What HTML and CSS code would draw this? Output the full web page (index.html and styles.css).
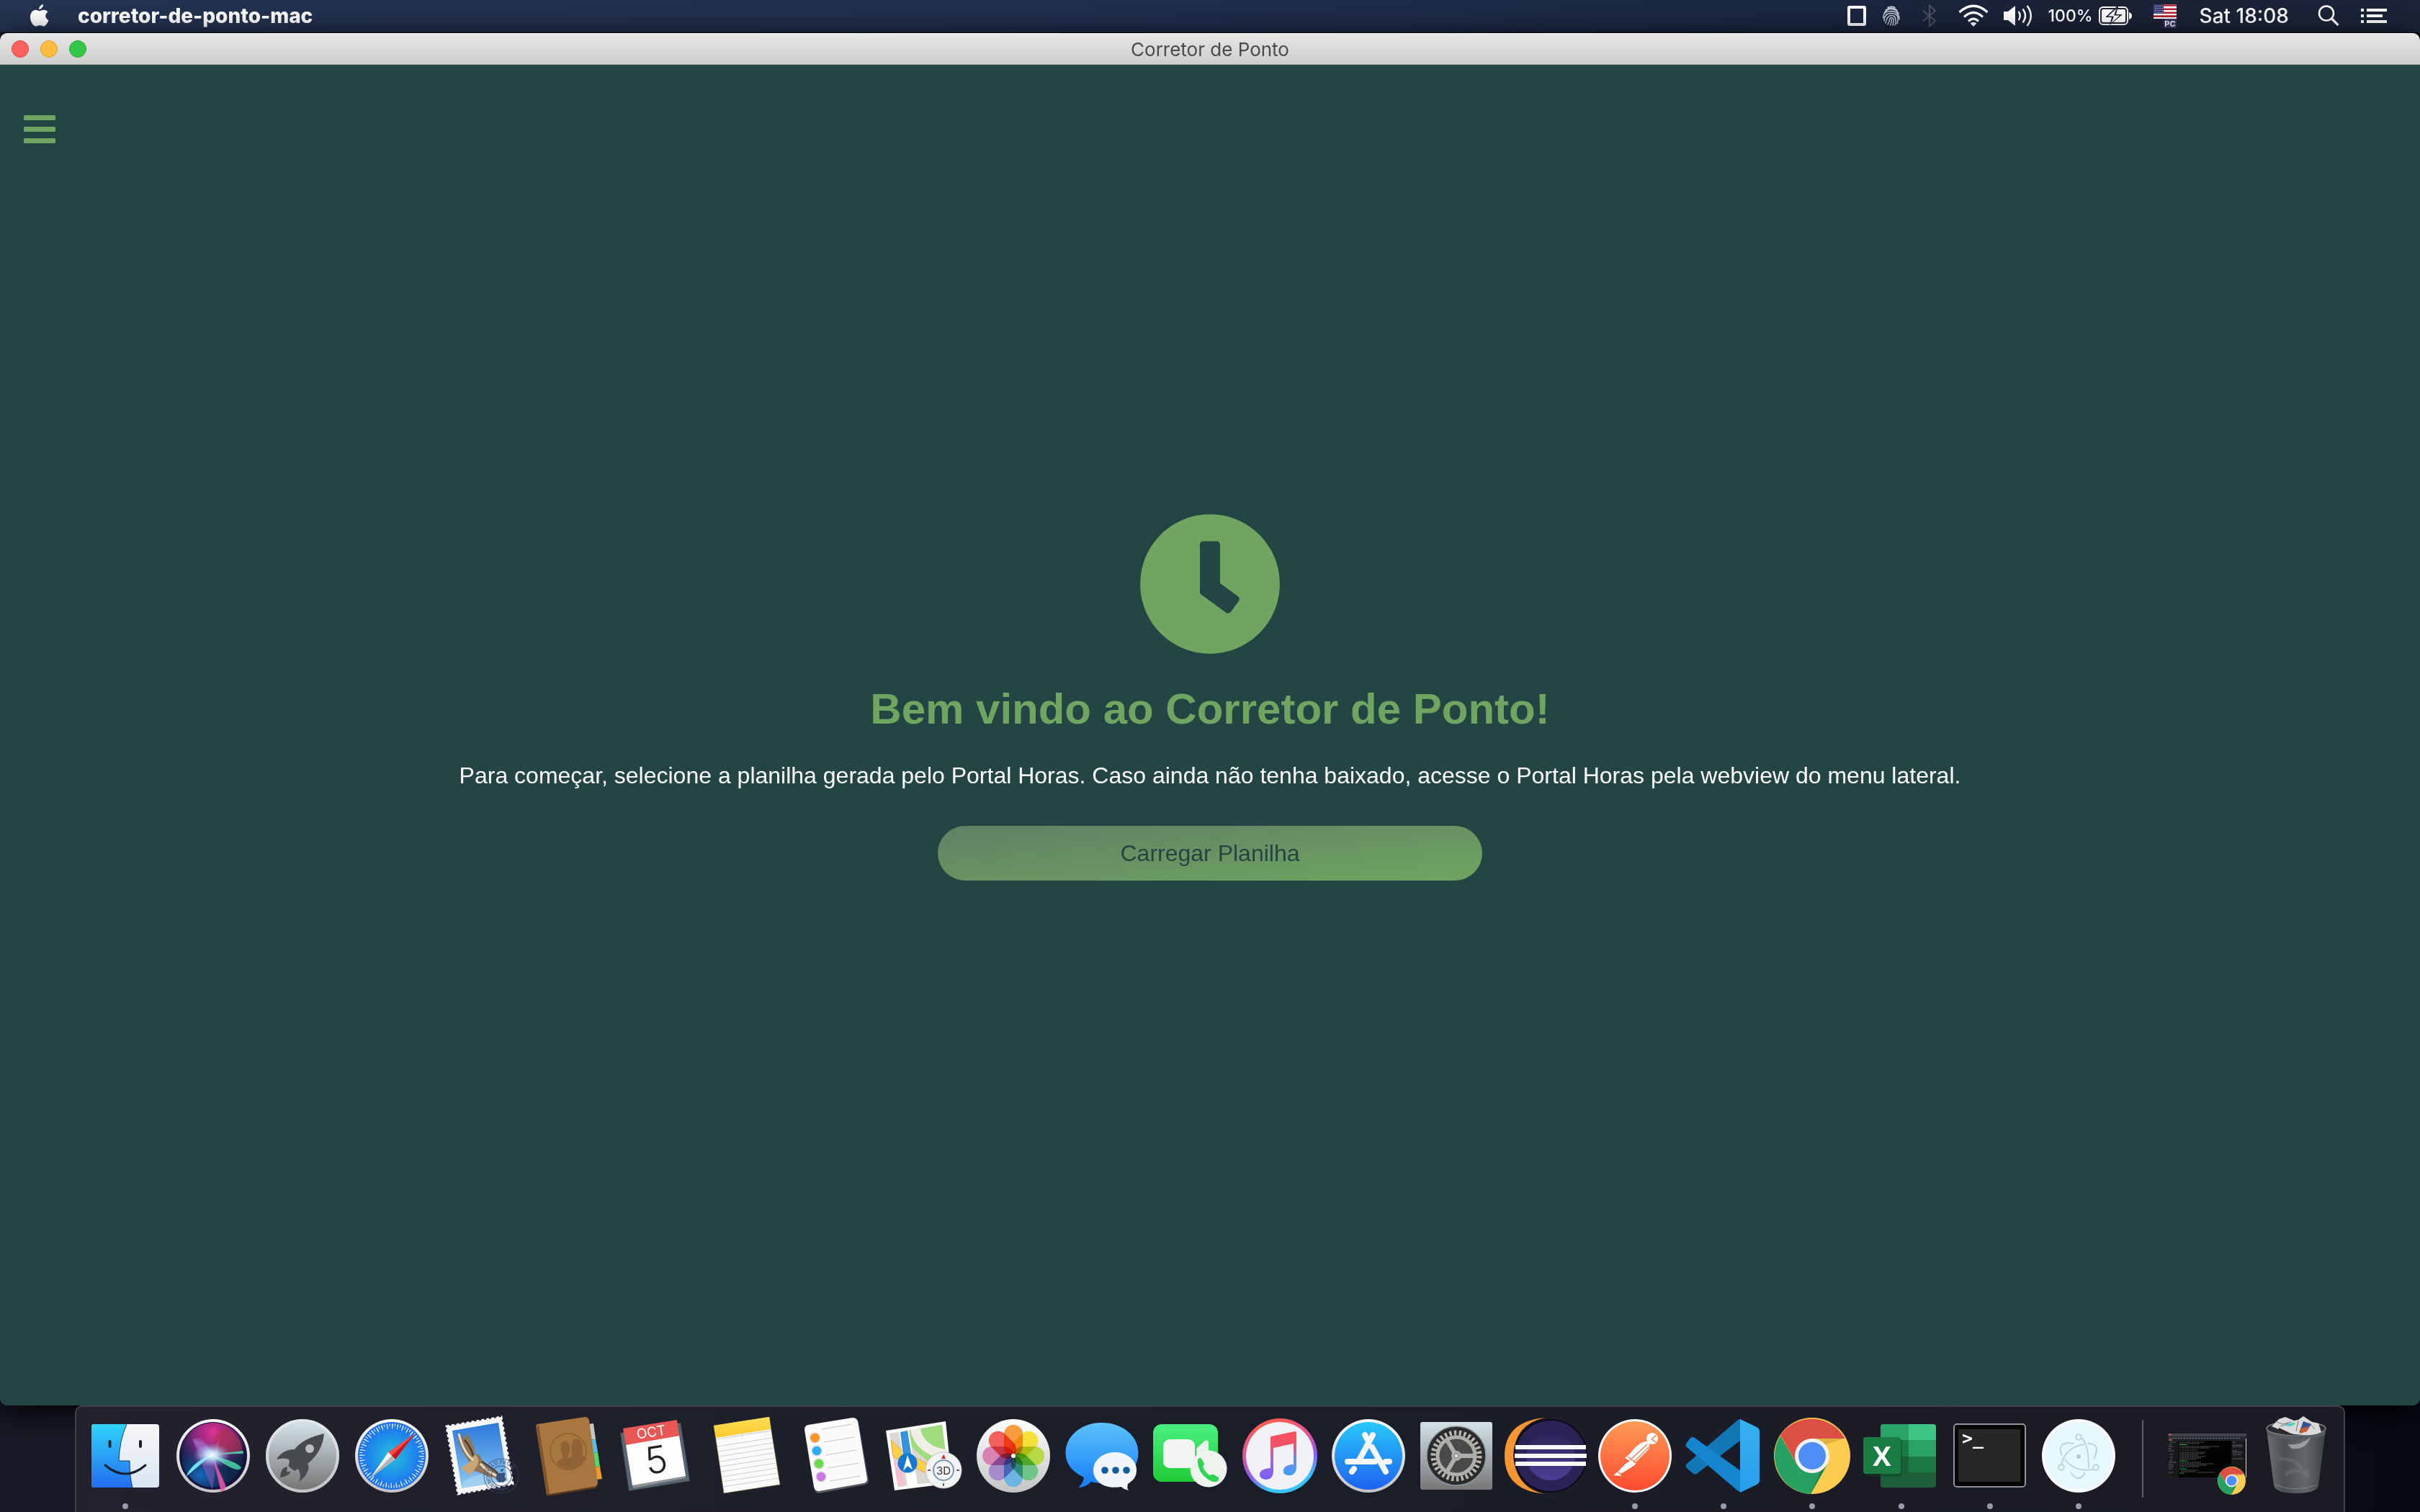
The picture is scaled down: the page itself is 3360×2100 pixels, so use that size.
FILE: index.html
```html
<!DOCTYPE html>
<html lang="pt-BR">
<head>
<meta charset="utf-8">
<title>Corretor de Ponto</title>
<link rel="stylesheet" href="styles.css">
</head>
<body>
<header class="menubar">
  <button class="mb-button apple" aria-label="Apple"><svg width="28" height="34" viewBox="0 0 28 34"><path fill="#fff" d="M19 1c.3 3-2.600 7-5.800 6.900C12.900 4.700 16 1.400 19 1zM14 10.200c1.400 0 3.200-1.700 6-1.500 2.300.1 4.300 1.100 5.500 2.900-4.900 3.100-4 9.400 1 11.500-1 3.100-3.600 7.700-6.300 8.300-2.200.3-3.300-1.200-5.900-1.200-2.700 0-3.700 1.400-5.900 1.200C4.500 31 1 24.300 1 18.700 1 12.400 4.900 8.800 8.700 8.800c2.300 0 3.800 1.400 5.300 1.400z"/></svg></button>
  <button class="mb-button app-name">corretor-de-ponto-mac</button>
  <div class="status">
    <svg width="28" height="28" viewBox="0 0 28 28"><rect x="3" y="2" width="22" height="24" rx="1" fill="none" stroke="#fff" stroke-width="4"/></svg>
    <svg class="print" width="26" height="28" viewBox="0 0 26 28" fill="none" stroke="#c4c8d2" stroke-width="1.500" stroke-linecap="round"><path d="M8 2.500Q13 0 18 2.500M5 6Q13 0 21 6M3 10.500Q6 4.500 13 4.500T23 11M2 17Q1 7.500 13 7.500 24 8 24 19M3 21Q3 10.500 13 10.500T22 20q0 3-1 5M5 24Q7 13.500 13 13.500t6 6.500q1 3-1 7M8 26q2-3 2.500-7 .5-2.500 2.500-2.500 3.500 0 3 5L15 27M11.500 27q2-4 1.500-8"/></svg>
    <svg class="bluetooth" width="20" height="32" viewBox="0 0 20 32" fill="none" stroke="#4b5264" stroke-width="2"><path d="M1 8.500l17 14.500-8 7.500V1.500l8 7.500L1 23.500"/></svg>
    <svg class="wifi" width="42" height="32" viewBox="0 0 42 32" fill="none" stroke="#fff" stroke-width="3.200"><path d="M1.500 11Q21-6.500 40.500 11M8 17.500Q21 5.500 34 17.500M14 23.500Q21 16.500 28 23.500"/><path d="M16.500 26.500q4.500-3.500 9 0L21 31z" fill="#fff" stroke="none"/></svg>
    <svg class="volume" width="42" height="32" viewBox="0 0 42 32"><path fill="#fff" d="M1 10h6l10-8v28L7 22H1z"/><path d="M21.500 10q4.500 6 0 12M27.500 6.500q7 9.500 0 19M33.500 2q10.500 14 0 28" fill="none" stroke="#fff" stroke-width="2.400"/></svg>
    <span class="percent">100%</span>
    <svg class="battery" width="46" height="26" viewBox="0 0 46 26"><rect x="1" y="1" width="39" height="24" rx="5" fill="none" stroke="#fff" stroke-width="2"/><rect x="4" y="4" width="33" height="18" rx="2" fill="#fff"/><path d="M42 8q4 1 4 5t-4 5z" fill="#fff"/><path d="M25 0L9 15h9l-3 11L33 11h-9l3-11z" fill="#1b2337"/><path d="M24.500 3L13 13.500h8L17.500 23 29 12.500h-8z" fill="#fff"/></svg>
    <svg class="flag" width="32" height="34" viewBox="0 0 32 34"><path fill="#fff" d="M0 1h32v20H0z"/><path d="M0 2.500h32M0 7.700h32M0 12.800h32M0 17.600h32" stroke="#b5202b" stroke-width="2.600"/><path fill="#3b3f77" d="M0 1h14v13H0z"/><path d="M2 3.500h11M2 6.500h11M2 9.500h11M2 12.500h11" stroke="#b9bdd6" stroke-width="1" stroke-dasharray="1 1.500"/><rect x="14" y="21" width="18" height="13" rx="2" fill="#3c3d72"/><text x="23" y="31.500" text-anchor="middle" class="t-flag">PC</text></svg>
    <time class="clock-text">Sat 18:08</time>
    <button class="mb-button search" aria-label="Spotlight"><svg width="30" height="30" viewBox="0 0 30 30" fill="none" stroke="#fff"><circle cx="12" cy="11.500" r="10" stroke-width="2.500"/><path d="M19 18.500l9.500 9.500" stroke-width="3.200"/></svg></button>
    <button class="mb-button list" aria-label="Notification Center"><svg width="36" height="20" viewBox="0 0 36 20" fill="#fff"><path d="M0 0h4v4H0zM8 0h28v4H8zM0 8h4v4H0zM8 8h22v4H8zM0 16h4v4H0zM8 16h28v4H8z"/></svg></button>
  </div>
</header>

<section class="window">
  <div class="titlebar">
    <div class="lights">
      <button class="light red" aria-label="Fechar"></button>
      <button class="light yellow" aria-label="Minimizar"></button>
      <button class="light green" aria-label="Maximizar"></button>
    </div>
    <h2 class="window-title">Corretor de Ponto</h2>
  </div>
  <nav class="side-toggle">
    <button class="hamburger" aria-label="Menu"><svg width="44" height="40" viewBox="0 0 44 40" fill="#6fa560"><rect y="0" width="44" height="7" rx="1.500"/><rect y="16" width="44" height="7" rx="1.500"/><rect y="32" width="44" height="7" rx="1.500"/></svg></button>
  </nav>
  <main class="welcome">
    <svg width="200" height="200" viewBox="0 0 512 512" fill="#6fa560"><path d="M256 8C119 8 8 119 8 256s111 248 248 248 248-111 248-248S393 8 256 8zm57.100 350.100L224.900 294c-3.100-2.300-4.900-5.900-4.900-9.700V116c0-6.600 5.400-12 12-12h48c6.600 0 12 5.400 12 12v137.700l63.500 46.200c5.400 3.900 6.500 11.400 2.600 16.800l-28.200 38.800c-3.900 5.300-11.400 6.500-16.800 2.600z"/></svg>
    <h1>Bem vindo ao Corretor de Ponto!</h1>
    <p>Para começar, selecione a planilha gerada pelo Portal Horas. Caso ainda não tenha baixado, acesse o Portal Horas pela webview do menu lateral.</p>
    <button class="load">Carregar Planilha</button>
  </main>
</section>

<footer class="dock">
  <svg class="defs" width="0" height="0" aria-hidden="true">
    <defs>
      <linearGradient id="ring" x2="0" y2="1"><stop stop-color="#fff"/><stop offset="1" stop-color="#c4c4c4"/></linearGradient>
      <linearGradient id="finder-l" x2="0" y2="1"><stop stop-color="#2fd3fb"/><stop offset="1" stop-color="#236ef0"/></linearGradient>
      <linearGradient id="finder-r" x2="0" y2="1"><stop stop-color="#f8f6f6"/><stop offset="1" stop-color="#d8e6f3"/></linearGradient>
      <linearGradient id="steel" x2="0" y2="1"><stop stop-color="#d3e3ea"/><stop offset="1" stop-color="#777"/></linearGradient>
      <linearGradient id="bright-green" x2="0" y2="1"><stop stop-color="#48ef80"/><stop offset="1" stop-color="#21cc38"/></linearGradient>
      <linearGradient id="msg" x2="0" y2="1"><stop stop-color="#5bc2f9"/><stop offset="1" stop-color="#157efb"/></linearGradient>
      <linearGradient id="store" x2="0" y2="1"><stop stop-color="#27c8fb"/><stop offset="1" stop-color="#1d62ee"/></linearGradient>
      <linearGradient id="post" x2="0" y2="1"><stop stop-color="#ff9a55"/><stop offset="1" stop-color="#ff4b30"/></linearGradient>
      <linearGradient id="tunes" x1=".35" y1="0" x2=".7" y2="1"><stop stop-color="#ff5d4b"/><stop offset=".35" stop-color="#e0559c"/><stop offset=".62" stop-color="#8e5bf8"/><stop offset=".85" stop-color="#35c4fb"/></linearGradient>
      <linearGradient id="note" x2="0" y2="1"><stop stop-color="#ff4f56"/><stop offset=".35" stop-color="#e8566f"/><stop offset=".6" stop-color="#9a6ad8"/><stop offset="1" stop-color="#7a5cfb"/></linearGradient>
      <linearGradient id="note-r" x2="0" y2="1"><stop stop-color="#ff4f56" stop-opacity="0"/><stop offset=".5" stop-color="#7d84d8"/><stop offset="1" stop-color="#38a4fb"/></linearGradient>
      <linearGradient id="sky" x2="0" y2="1"><stop stop-color="#2a78da"/><stop offset="1" stop-color="#8fcaf2"/></linearGradient>
      <linearGradient id="yellow" x2="0" y2="1"><stop stop-color="#ffdf56"/><stop offset="1" stop-color="#fdc92c"/></linearGradient>
      <linearGradient id="vs-r" x2="0" y2="1"><stop stop-color="#35b2ef"/><stop offset="1" stop-color="#2a9bec"/></linearGradient>
      <linearGradient id="trash" x2="1" y2="0"><stop stop-color="#6b7073"/><stop offset=".3" stop-color="#4c5053"/><stop offset=".65" stop-color="#63676a"/><stop offset="1" stop-color="#3e4144"/></linearGradient>
      <linearGradient id="eclipse" x2="0" y2="1"><stop stop-color="#2c2255"/><stop offset="1" stop-color="#4d3f94"/></linearGradient>
      <radialGradient id="safari"><stop stop-color="#22c3df"/><stop offset="1" stop-color="#1d6cf0"/></radialGradient>
      <radialGradient id="siri-pink" cx=".5" cy=".15" r=".6"><stop stop-color="#e0338f"/><stop offset=".5" stop-color="#a02a86" stop-opacity=".8"/><stop offset="1" stop-color="#5a2280" stop-opacity="0"/></radialGradient>
      <radialGradient id="siri-blue" cx=".3" cy=".8" r=".5"><stop stop-color="#1668bd"/><stop offset="1" stop-color="#153a7c" stop-opacity="0"/></radialGradient>
      <radialGradient id="siri-glow"><stop stop-color="#fff"/><stop offset=".35" stop-color="#c6f5ff" stop-opacity=".8"/><stop offset="1" stop-color="#8af" stop-opacity="0"/></radialGradient>
      <symbol id="chrome" viewBox="0 0 106 106">
        <circle cx="53" cy="53" r="53" fill="#fecd4f"/>
        <path d="M53 53L9 24A53 53 0 0 1 98.500 29H53z" fill="#dc4f45"/>
        <path d="M9 25A53 53 0 0 0 51 106L74 65 53 53 32 65z" fill="#26a162"/>
        <path d="M9 24L31 63 53 29z" fill="#dc4f45"/>
        <path d="M53 29h45l-28 9z" fill="#d9a53a" opacity=".7"/>
        <path d="M51 106l23-41-9 9z" fill="#176e41" opacity=".6"/>
        <circle cx="53" cy="53" r="24" fill="#f2f2f2"/><circle cx="53" cy="53" r="19" fill="#4f8ef5"/>
      </symbol>
      <rect id="petal" x="47" y="17" width="26" height="43" rx="13"/>
      <path id="post-arc" d="M72 88a17 17 0 0 1 34 0"/>
      <path id="post-arc-low" d="M68 88a21 21 0 0 0 42 0"/>
    </defs>
  </svg>
  <ul class="apps">
    <li><button class="app running" aria-label="Finder"><svg viewBox="0 0 120 120"><rect x="13" y="16" width="94" height="88" rx="4" fill="url(#finder-r)"/><path d="M62 16Q52 38 51 67h15q0 22 4 37H17a4 4 0 0 1-4-4V20a4 4 0 0 1 4-4z" fill="url(#finder-l)"/><path d="M62 16Q52 38 51 67h15q0 22 4 37" fill="none" stroke="#15415f" stroke-width="1"/><path d="M38.500 40v7M81 40v7" stroke="#16222e" stroke-width="4" stroke-linecap="round"/><path d="M32 73q28 24 56 0" fill="none" stroke="#16222e" stroke-width="3" stroke-linecap="round"/></svg></button></li>
    <li><button class="app" aria-label="Siri"><svg viewBox="0 0 120 120"><circle cx="59" cy="60" r="51" fill="url(#ring)"/><circle cx="59" cy="60" r="47" fill="#14133c"/><circle cx="59" cy="60" r="42" fill="#102645"/><circle cx="59" cy="60" r="44" fill="url(#siri-blue)"/><circle cx="59" cy="60" r="46" fill="url(#siri-pink)"/><path d="M58 58Q60 22 78 22q22 12 21 32-20 6-41 4z" fill="#b3344f" opacity=".6"/><path d="M30 37q16-8 28 21l10-24-10 74" fill="#c66bd8" opacity=".35"/><path d="M57 56Q52 42 31 37q8 22 26 19z" fill="#a07bd8" opacity=".5"/><path d="M58 60l12 50q9-3 5-12z" fill="#f055a8" opacity=".85"/><path d="M58 58l42-5q3 4-2 4zM58 60q36 8 40 17-7 8-40-17z" fill="#4be3ae" opacity=".8"/><path d="M58 58L21 89q3 0 1-2 10-20 36-29z" fill="#6fe6ea"/><ellipse cx="57" cy="59" rx="26" ry="17" fill="url(#siri-glow)"/></svg></button></li>
    <li><button class="app" aria-label="Launchpad"><svg viewBox="0 0 120 120"><circle cx="60" cy="60" r="51" fill="#bcc7cc"/><circle cx="60" cy="60" r="47" fill="url(#steel)"/><circle cx="60" cy="60" r="49" fill="none" stroke="url(#ring)" stroke-width="4" opacity=".6"/><path d="M90 29Q60 36 49 51q-17 0-25 14 10-3 17 0l1 4q-2 3-1 6l8 6 5-3 2 5q2 6-1 13 11-8 13-17 1-6-1-8Q88 54 90 29zM39 75q-9 1-10 15 12-1 15-9-5 2-6 1z" fill="#474b4d"/><circle cx="70" cy="50" r="6" fill="#b6c0c4"/></svg></button></li>
    <li><button class="app" aria-label="Safari"><svg viewBox="0 0 120 120"><circle cx="60" cy="60" r="51" fill="url(#ring)"/><circle cx="60" cy="60" r="47" fill="url(#safari)"/><circle cx="60" cy="60" r="41" fill="none" stroke="#dcecfb" stroke-width="7" stroke-dasharray="1.300 5.855"/><circle cx="60" cy="60" r="43" fill="none" stroke="#dcecfb" stroke-width="4" stroke-dasharray="1.200 2.550"/><path d="M92 29L55 55l10 10z" fill="#fb4a4a"/><path d="M92 29L60 60l5 5z" fill="#cf1420"/><path d="M30 91l25-36 5 5z" fill="#f5f5f5"/><path d="M30 91l35-26-5-5z" fill="#b5b5b5"/></svg></button></li>
    <li><button class="app" aria-label="Mail"><svg viewBox="0 0 120 120"><path d="M13 19L89 6l16 93-76 14z" fill="#f6f6f6" stroke="#f6f6f6" stroke-width="3" stroke-dasharray="4 3"/><path d="M21 25l64-11 13 81-64 10z" fill="url(#sky)"/><path d="M36 96q18-14 58-12l4 11-64 10z" fill="#b9dbf2" opacity=".5"/><path d="M28 27l5 10-2-11 5 11 0-11 3 12 2-10q10 14 12 30 6-1 8 5 3 8 22 18l5 12-3-4-2 5-4-4-10-2-13-6q-14-3-10-12Q28 48 28 27z" fill="#8f7456"/><path d="M46 68l6-10q8 6 4 15L46 87l-13-10z" fill="#c9a578"/><path d="M30 29q6 26 20 37M60 71q10 12 28 19" stroke="#e8dcc8" stroke-width="3" fill="none"/><path d="M38 38q9 10 12 22M62 68q14 8 24 18" stroke="#403428" stroke-width="2" fill="none"/><circle cx="89" cy="88" r="24" fill="none" stroke="#38486b" stroke-opacity=".5" stroke-width="1.500"/><circle cx="89" cy="88" r="14" fill="none" stroke="#38486b" stroke-opacity=".6" stroke-width="1.500"/><text class="t-stamp"><textPath href="#post-arc">HELLO FROM</textPath></text><text class="t-stamp"><textPath href="#post-arc-low">CALIFORNIA</textPath></text><path d="M89 84q4-2 6 1-3 4 1 7-4 7-7 4-4 3-7-4-1-10 7-8zM88 82q0-4 4-4 0 4-4 4z" fill="#38547d"/></svg></button></li>
    <li><button class="app" aria-label="Contacts"><svg viewBox="0 0 120 120"><path d="M86 16l8-1 3 22-8 1z" fill="#c6c6c6"/><path d="M89 38l8-1 3 18-8 1z" fill="#58bfe9"/><path d="M92 56l8-1 3 20-8 1z" fill="#50d868"/><path d="M95 76l8-1 3 17-8 1z" fill="#eb9c28"/><path d="M14 19q0-2 2-3L82 6q5 0 6 5l12 86q0 5-5 6l-66 11z" fill="#a87740"/><path d="M14 19l15 95 4-1L18 17z" fill="#80552a"/><path d="M29 114l66-11q4-1 5-5l-2 7-68 11z" fill="#5a3a1a"/><circle cx="59" cy="54" r="25" fill="none" stroke="#8b6133" stroke-width="1.500"/><path d="M42 70q5-4 10-7-8-22 2-24 11 2 5 21l-2 4 7-3q-3-24 6-25 12 1 8 23l6 4q-6 15-22 15-13 0-20-8z" fill="#8f6335"/></svg></button></li>
    <li><button class="app" aria-label="Calendar"><svg viewBox="0 0 120 120"><path d="M8 28l84-14 13 81-85 14z" fill="#56656f" stroke="#2c353c"/><path d="M16 45L26 105l73-14V88z" fill="#8d9296"/><path d="M16 44l74-12 9 56-74 13z" fill="#fdfdfd"/><path d="M12 22l75-12 3 22-74 13z" fill="#e85753"/><g transform="rotate(-9 58 65)"><text x="57" y="33" text-anchor="middle" class="t-month">OCT</text><text x="58" y="84" text-anchor="middle" class="t-day">5</text></g></svg></button></li>
    <li><button class="app" aria-label="Notes"><svg viewBox="0 0 120 120"><path d="M14 18L91 6l15 94-78 12z" fill="#fbfbfa" stroke="#6e5a24" stroke-width=".6"/><path d="M14 18L91 6l2 17-76 12z" fill="url(#yellow)"/><path d="M17 37l76-12" stroke="#888" stroke-dasharray="1 1.500"/><path d="M19 47l76-12M20 54l76-12M21 61l76-12M22 68l76-12M23 75l77-12M24 82l77-12M25 89l77-12M26 96l77-12M27 103l77-12" stroke="#cfcfcf"/></svg></button></li>
    <li><button class="app" aria-label="Reminders"><svg viewBox="0 0 120 120"><path d="M17 24q0-6 5-7L84 7q5 0 7 5l14 80q0 5-5 6l-63 12q-6 0-7-6z" fill="#555b60" transform="translate(1 2)"/><path d="M17 24q0-6 5-7L84 7q5 0 7 5l13 80q0 5-5 6l-62 11q-6 0-7-6z" fill="#fafafa"/><path d="M41 23l42-7M44 41l42-7M46 59l43-7M49 77l43-7M52 95l42-7" stroke="#c4c4c4"/><g stroke="#ddd" stroke-width="1.500"><circle cx="31.500" cy="35" r="7" fill="#fd9426"/><circle cx="34" cy="53" r="7" fill="#2aacf6"/><circle cx="37" cy="71" r="7" fill="#68da48"/><circle cx="40" cy="89" r="7" fill="#cb78e2"/></g></svg></button></li>
    <li><button class="app" aria-label="Maps"><svg viewBox="0 0 120 120"><path d="M7 25l83-13 9 86-80 10z" fill="#fbfbfa"/><path d="M12 29l73-12 9 77-70 9z" fill="#d9d7d0"/><path d="M39 25l46-8 6 46-20 10-28-25z" fill="#9fdc7c"/><path d="M41 24l14-2q4 24 34 29l2 14Q48 58 41 24z" fill="#f1eee8"/><path d="M14 38l10 10 10 7 60 32 0 7-9 1-68-34z" fill="#fdd04a" stroke="#f0a030"/><path d="M17 63l11 12 5 27-9 1z" fill="#f6bfcf"/><path d="M25 27l14-3 12 76-14 2z" fill="#fff"/><path d="M27 27l10-2 6 38-11 4z" fill="#3592dc"/><circle cx="37" cy="70" r="13.500" fill="#1577d4"/><path d="M37 59l7 20-7-5-6 7z" fill="#fff"/><circle cx="87" cy="80" r="25" fill="#f2f3f5" stroke="#c6c6c8"/><circle cx="87" cy="80" r="14" fill="none" stroke="#779bb4" stroke-width="2"/><path d="M87 58l3 6h-6z" fill="#ee1d1d"/><path d="M65 80h4M105 80h4M87 98v4" stroke="#333" stroke-width="1.500"/><text x="87" y="86" text-anchor="middle" class="t-3d">3D</text></svg></button></li>
    <li><button class="app" aria-label="Photos"><svg viewBox="0 0 120 120"><circle cx="60" cy="60" r="51" fill="url(#ring)"/><g class="petals"><use href="#petal" fill="#f99b3e"/><use href="#petal" fill="#f5e13a" transform="rotate(45 60 60)"/><use href="#petal" fill="#b5d847" transform="rotate(90 60 60)"/><use href="#petal" fill="#6fc588" transform="rotate(135 60 60)"/><use href="#petal" fill="#6cb4e2" transform="rotate(180 60 60)"/><use href="#petal" fill="#a48ccb" transform="rotate(225 60 60)"/><use href="#petal" fill="#d784b4" transform="rotate(270 60 60)"/><use href="#petal" fill="#f4605c" transform="rotate(315 60 60)"/></g><circle cx="60" cy="60" r="3" fill="#fff"/></svg></button></li>
    <li><button class="app" aria-label="Messages"><svg viewBox="0 0 120 120"><path d="M60 14c28 0 50.500 18 50.500 42S88 98 60 98q-8 0-15-2-8 8-18 8 7-6 8-14Q9.500 78 9.500 56C9.500 32 32 14 60 14z" fill="url(#msg)"/><path d="M78 55c17 0 30 11 30 25 0 8-4 14-12 19-1 4-1 7 1 9-5-1-8-3-10-5-24 4-39-8-39-23 0-14 13-25 30-25z" fill="#f1f6fc"/><g fill="#145a9f"><circle cx="64" cy="80" r="4.800"/><circle cx="79" cy="80" r="4.800"/><circle cx="94" cy="80" r="4.800"/></g></svg></button></li>
    <li><button class="app" aria-label="FaceTime"><svg viewBox="0 0 120 120"><rect x="8" y="16" width="90" height="80" rx="12" fill="url(#bright-green)"/><rect x="22" y="37" width="44" height="40" rx="9" fill="#f2f5f2"/><path d="M68 50l12-11q5-2 5 3v20H68z" fill="#e9efe9"/><circle cx="85" cy="78" r="25.500" fill="#eff3ee"/><path d="M70 65q3-4 5-1l4 7q0 2-2 4 3 8 10 12 2-2 5-1l7 4q1 4-3 6-7 1-14-5-13-10-12-26z" fill="#2ed552"/></svg></button></li>
    <li><button class="app" aria-label="iTunes"><svg viewBox="0 0 120 120"><circle cx="60" cy="60" r="52" fill="url(#tunes)"/><circle cx="60" cy="60" r="47" fill="#f1f2f6"/><path d="M47 34q0-1 1-1l33-7q2 0 2 2v45q0 13-9 14-9 0-9-6 0-8 14-9V43l-28 6v33q-1 11-10 11-9-1-9-7 0-8 15-9z" fill="url(#note)"/><path d="M79 36h4v37q0 13-9 14-9 0-9-6 0-8 14-9z" fill="url(#note-r)"/></svg></button></li>
    <li><button class="app" aria-label="App Store"><svg viewBox="0 0 120 120"><circle cx="60" cy="60" r="51" fill="url(#ring)"/><circle cx="60" cy="60" r="47" fill="url(#store)"/><g stroke="#f4f6f8" stroke-width="8" stroke-linecap="round" fill="none"><path d="M66 31L47 66M55 31l5 9M31 68h38M84 68h5M84 82L65 48M40 78l-3 4"/></g></svg></button></li>
    <li><button class="app" aria-label="System Preferences"><svg viewBox="0 0 120 120"><rect x="9" y="13" width="100" height="94" rx="3" fill="url(#steel)"/><circle cx="59" cy="60" r="41" fill="#2c2b2b" stroke="#8e9aa3" stroke-width="1.500"/><circle cx="59" cy="60" r="32" fill="none" stroke="#b8b6b1" stroke-width="7" stroke-dasharray="3.400 3.302"/><circle cx="59" cy="60" r="26" fill="#4c4a48" stroke="#b0aeaa" stroke-width="5"/><path d="M59 60h25M59 60L46 38M59 60L46 82" stroke="#b0aeaa" stroke-width="6"/><circle cx="59" cy="60" r="7" fill="#b0aeaa"/><circle cx="59" cy="60" r="3" fill="#dedede" stroke="#777"/></svg></button></li>
    <li><button class="app" aria-label="Eclipse"><svg viewBox="0 0 120 120"><path d="M58 7Q2 12 2 60t56 53Q18 105 14 60 16 16 58 7z" fill="#f79532"/><circle cx="66" cy="60" r="50" fill="#2c2255" stroke="#0b0a18" stroke-width="2"/><circle cx="66" cy="60" r="34" fill="url(#eclipse)"/><path d="M17 48h98M16 60h100M17 71h98" stroke="#f7f6fa" stroke-width="6"/></svg></button></li>
    <li><button class="app running" aria-label="Postman"><svg viewBox="0 0 120 120"><circle cx="60" cy="60" r="51" fill="#fff"/><circle cx="60" cy="60" r="48" fill="url(#post)"/><circle cx="84" cy="36" r="8" fill="#fff"/><path d="M83 37l7-6M83 37l6 4" stroke="#ff7a48" stroke-width="1.500"/><path d="M75 40q5 0 5 5 1 4-3 8L62 68q0 3-4 6L42 84l-2 0 1 4-11-1 6-5 11-11 6-4-7-4 7-6q12-16 22-17z" fill="#fff"/><path d="M77 44L53 66M79 48L58 69M50 61l12 9M36 82l4 4" stroke="#ff7045" stroke-width="1.200"/></svg></button></li>
    <li><button class="app running" aria-label="Visual Studio Code"><svg viewBox="0 0 120 120"><path d="M80 10q2-1 4-1v29L24 84q-4 3-7 0l-8-7q-3-3 0-6z" fill="#1377b6"/><path d="M14 35q3-2 6 0l64 46v29q-2 0-5-2L9 48q-3-3 0-6z" fill="#1585cf"/><path d="M83 9l23 11q4 2 4 6v68q0 4-4 6l-23 11z" fill="url(#vs-r)"/></svg></button></li>
    <li><button class="app running" aria-label="Google Chrome"><svg viewBox="0 0 120 120"><use href="#chrome" x="7" y="7" width="106" height="106"/></svg></button></li>
    <li><button class="app running" aria-label="Excel"><svg viewBox="0 0 120 120"><rect x="31" y="16" width="77" height="88" rx="4" fill="#1d5f39"/><path d="M31 20q0-4 4-4h35v45H31z" fill="#29a367"/><path d="M70 16h34q4 0 4 4v18H70z" fill="#3fc585"/><path d="M70 38h38v23H70z" fill="#2ba266"/><path d="M31 38h39v23H31zM70 61h38v22H70z" fill="#1b7a44"/><rect x="10" y="38" width="51" height="51" rx="4" fill="#0c4023" opacity=".45"/><rect x="7" y="34" width="52" height="51" rx="4" fill="#187c43"/><text x="33" y="74" text-anchor="middle" class="t-excel">X</text></svg></button></li>
    <li><button class="app running" aria-label="Terminal"><svg viewBox="0 0 120 120"><rect x="10" y="16" width="99" height="87" rx="4" fill="#060606" stroke="#b6bfc4" stroke-width="1.500"/><rect x="16" y="23" width="86" height="73" fill="#272727"/><text x="21" y="44" class="t-term">&gt;_</text></svg></button></li>
    <li><button class="app running" aria-label="Electron"><svg viewBox="0 0 120 120"><circle cx="60" cy="60" r="51" fill="#fafafa"/><circle cx="60" cy="60" r="47" fill="#e6f8fb"/><g fill="none" stroke="#bdd5d8" stroke-width="2"><circle cx="60" cy="34" r="3.800"/><circle cx="36" cy="76" r="3.800"/><circle cx="84" cy="76" r="3.800"/><path d="M64 35q10 8 10 42M68 44Q42 48 36 72M41 65q14 18 39 14M54 43q-26-4-17 17M73 43q19 0 8 21M49 83q12 16 20 0"/></g><circle cx="60" cy="61" r="3" fill="#a9cdd2"/></svg></button></li>
  </ul>
  <div class="divider"></div>
  <button class="thumb" aria-label="Google Chrome minimizado">
    <svg width="110" height="86" viewBox="0 0 110 86"><rect y="0" width="109" height="61" fill="#020303"/><path d="M0 0h109v4H0z" fill="#3d444a"/><path d="M0 4h109v6H0z" fill="#24282d"/><path d="M0 10h15v51H0zM88 10h20v51H88z" fill="#17191b"/><path d="M108 7h1v54h-1z" fill="#d6d9de"/><path d="M2 6.500h100" stroke="#8590a0" stroke-dasharray="2 2"/><path d="M1 1.500h4M1 9h5" stroke="#d9573c" stroke-width="1.500"/><path d="M3 12h8M1 15h5M1 18h6M1 21h4M1 24h8M3 29h4M3 33h4M3 37h4M1 40h11M1 43h6M1 46h7M1 49h5M1 54h6M90 12h4M90 16h13M90 18h14M90 24h6M90 26h14M90 29h12M90 35h15" stroke="#66696c" stroke-dasharray="3 .5"/><path d="M16 12h34M16 14h28M16 18h55M16 20h41M16 23h25M16 26h36M16 28h34M16 30h26M16 32h36M16 34h30M16 36h24M16 40h31M16 42h47M16 44h38M16 46h27M18 51h24M18 53h20M40 54h25" stroke="#54575a" stroke-dasharray="2 .5 4 .5"/><path d="M16 15.500h10M16 38h11M16 49h10M16 55h6" stroke="#1ca63a"/><use href="#chrome" x="69" y="46" width="39" height="39"/></svg>
  </button>
  <button class="trash" aria-label="Trash">
    <svg width="84" height="110" viewBox="0 0 84 110"><path d="M1 19l10 78q2 11 31 11t31-11l10-78z" fill="url(#trash)"/><ellipse cx="42" cy="18" rx="41" ry="10" fill="#2a2d30" stroke="#85898c" stroke-width="1.500"/><path d="M8 15l10-10 9-3 12 5 6-1 7-5 12 8 9 2 4 12-12 5-26-2-14-4z" fill="#d9d9da"/><path d="M13 8l10 4 12-3M45 7l-3 15M60 10l8 9M20 15l12-4" stroke="#777" fill="none"/><path d="M18 17l15 7h-16z" fill="#322829"/><path d="M27 14l9-4h5l-6 5z" fill="#39cfe2"/><path d="M35 11h6l-3 3z" fill="#71d945"/><path d="M52 8l11 4-5 8-12 4z" fill="#36528f"/><path d="M48 18l12-3-3 7-9 3z" fill="#c65e35"/><path d="M1 19q4 9 41 9t41-9l-1 8q-12 6-40 6T2 27z" fill="#585c5f"/><path d="M30 40q18 2 32-10-6 18-26 16z" fill="#a9adaf" opacity=".8"/><path d="M18 60q24 0 30 12t12 4M26 82q20-12 34 4" stroke="#8c9092" stroke-width="5" fill="none" opacity=".25"/><path d="M13 96q28 12 58 0" stroke="#8b8f91" fill="none" opacity=".7"/></svg>
  </button>
</footer>
</body>
</html>
```
FILE: styles.css
```css
* { box-sizing: border-box; }

body {
  margin: 0;
  min-height: 100vh;
  display: flex;
  flex-direction: column;
  background: linear-gradient(90deg, #171a26, #070a15);
  font-family: Inter, "Liberation Sans", sans-serif;
}

button {
  margin: 0;
  padding: 0;
  border: 0;
  background: none;
  font: inherit;
  color: inherit;
}

svg { display: block; }

/* System menu bar */
.menubar {
  display: flex;
  align-items: center;
  height: 46px;
  padding: 0 46px 2px 41px;
  border-bottom: 1px solid #04060c;
  background: linear-gradient(90deg, #253350, #1f2c4c 50%, #1a2740 76%, #1a2236 85%, #1b2438);
  color: #fff;
}

.app-name {
  margin-left: 39px;
  font-size: 28px;
  font-weight: 800;
}

.status {
  display: flex;
  align-items: center;
  margin-left: auto;
  white-space: nowrap;
}

.print { margin-left: 21px; }
.bluetooth { margin-left: 30px; }
.wifi { margin-left: 30px; }
.volume { margin-left: 20px; }
.percent { margin-left: 20px; font-size: 23px; font-weight: 500; }
.battery { margin-left: 8px; }
.flag { margin-left: 30px; }
.clock-text { margin-left: 32px; font-size: 28px; font-weight: 500; }
.search { margin-left: 40px; }
.list { margin-left: 30px; }

/* Application window */
.window {
  flex: 1;
  display: flex;
  flex-direction: column;
  overflow: hidden;
  border-radius: 10px;
  background: #234644;
  box-shadow: 0 8px 40px #000;
}

.titlebar {
  display: grid;
  grid-template-columns: 1fr auto 1fr;
  align-items: center;
  height: 44px;
  padding: 0 16px;
  border-top: 1px solid #f4f4f4;
  border-bottom: 1px solid #a9a9a9;
  background: linear-gradient(#e6e6e6, #cdcdcd);
}

.lights { display: flex; gap: 16px; }

.light {
  width: 24px;
  height: 24px;
  border: 1px solid #e2463f;
  border-radius: 50%;
  background: #fc615d;
}

.yellow { border-color: #dfa023; background: #fdbc40; }
.green { border-color: #27aa35; background: #34c84a; }

.window-title {
  margin: 0;
  font-size: 26px;
  font-weight: 400;
  color: #4b4b4b;
}

.side-toggle { padding: 70px 33px 20px; }

.welcome {
  flex: 1;
  display: flex;
  flex-direction: column;
  align-items: center;
  justify-content: center;
  padding-bottom: 242px;
  font-family: "Liberation Sans", Arial, sans-serif;
  font-size: 32px;
  line-height: 36px;
  color: #fff;
}

h1 {
  margin: 40px 0;
  font-size: 60px;
  line-height: 68px;
  color: #6fa560;
}

p { margin: 0; }

.load {
  width: 756px;
  max-width: 100%;
  height: 76px;
  margin-top: 52px;
  border-radius: 38px;
  background: linear-gradient(to bottom right, #608065, #6fa560);
  color: #234644;
}

/* Dock */
.dock {
  display: flex;
  height: 148px;
  margin: 0 104px;
  padding: 8px 24px 0 6px;
  border: 2px solid #414249;
  border-bottom: 0;
  border-radius: 10px 10px 0 0;
  background: linear-gradient(90deg, #21222e, #1b1d29 50%, #1a1b24);
  position: relative;
}

.defs { position: absolute; }

.apps {
  flex: 1;
  display: grid;
  grid-template-columns: repeat(23, 1fr);
  margin: 0;
  padding: 0;
  list-style: none;
}

.app {
  display: flex;
  flex-direction: column;
  align-items: center;
  gap: 6px;
  width: 100%;
}

.app svg { width: 120px; height: 120px; }

.running::after {
  content: "";
  width: 8px;
  height: 8px;
  border-radius: 50%;
  background: #9b9cab;
}

.divider {
  width: 2px;
  height: 108px;
  margin: 10px 34px 0 26px;
  background: #5b5c65;
}

.thumb { align-self: flex-start; margin-top: 29px; }
.trash { align-self: flex-start; margin: 4px 0 0 26px; }

.petals { isolation: isolate; }
.petals use { mix-blend-mode: multiply; }

.t-flag { font: 700 11px Inter, sans-serif; fill: #fff; }
.t-stamp { font: 700 7px Inter, sans-serif; fill: #38486b; fill-opacity: 0.7; }
.t-month { font: 400 19px Inter, sans-serif; fill: #fff; }
.t-day { font: 300 52px Inter, sans-serif; fill: #222; }
.t-3d { font: 400 15px Inter, sans-serif; fill: #333; }
.t-excel { font: 700 38px "Open Sans", sans-serif; fill: #fff; }
.t-term { font: 700 25px "DejaVu Sans Mono", monospace; fill: #fff; }
```
